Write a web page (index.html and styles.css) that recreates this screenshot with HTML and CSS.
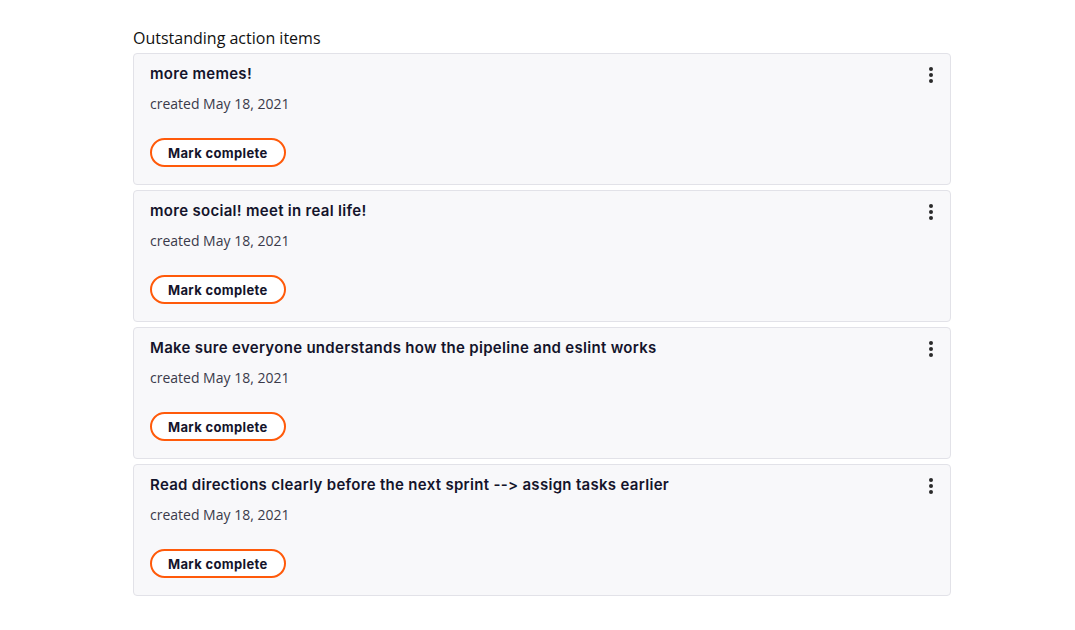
FILE: index.html
```html
<!DOCTYPE html>
<html>
<head>
<meta charset="utf-8">
<link rel="stylesheet" href="styles.css">
</head>
<body>
<main class="page">
  <h2 class="heading">Outstanding action items</h2>
  <ul class="list">
    <li class="card">
      <div class="card-top">
        <h3 class="title">more memes!</h3>
        <button class="kebab" aria-label="More options"><span></span><span></span><span></span></button>
      </div>
      <p class="date">created May 18, 2021</p>
      <button class="mark">Mark complete</button>
    </li>
    <li class="card">
      <div class="card-top">
        <h3 class="title">more social! meet in real life!</h3>
        <button class="kebab" aria-label="More options"><span></span><span></span><span></span></button>
      </div>
      <p class="date">created May 18, 2021</p>
      <button class="mark">Mark complete</button>
    </li>
    <li class="card">
      <div class="card-top">
        <h3 class="title">Make sure everyone understands how the pipeline and eslint works</h3>
        <button class="kebab" aria-label="More options"><span></span><span></span><span></span></button>
      </div>
      <p class="date">created May 18, 2021</p>
      <button class="mark">Mark complete</button>
    </li>
    <li class="card">
      <div class="card-top">
        <h3 class="title">Read directions clearly before the next sprint --&gt; assign tasks earlier</h3>
        <button class="kebab" aria-label="More options"><span></span><span></span><span></span></button>
      </div>
      <p class="date">created May 18, 2021</p>
      <button class="mark">Mark complete</button>
    </li>
  </ul>
</main>
</body>
</html>
```

FILE: styles.css
```css
* { box-sizing: border-box; }
html, body { margin: 0; padding: 0; background: #ffffff; }
body { font-family: "Open Sans", "Noto Sans", sans-serif; color: #1d1d2b; }

.page {
  width: 818px;
  margin-left: 133px;
  padding-top: 27px;
}

.heading {
  margin: 0 0 4px 0;
  font-size: 16px;
  line-height: 22px;
  font-weight: 400;
  color: #111111;
}

.list {
  list-style: none;
  margin: 0;
  padding: 0;
  display: flex;
  flex-direction: column;
  gap: 5px;
}

.card {
  background: #f8f8fa;
  border: 1px solid #e2e2e8;
  border-radius: 4px;
  padding: 9px 16px 16px 16px;
  height: 132px;
  display: flex;
  flex-direction: column;
  align-items: flex-start;
}

.card-top {
  width: 100%;
  display: flex;
  justify-content: space-between;
  align-items: flex-start;
}

.title {
  margin: 0;
  font-family: Inter, "Noto Sans", sans-serif;
  font-size: 15px;
  line-height: 22px;
  font-weight: 600;
  color: #14142b;
  letter-spacing: 0.3px;
}

.kebab {
  border: 0;
  background: transparent;
  padding: 0;
  margin: 4px 0 0 0;
  width: 6px;
  display: flex;
  flex-direction: column;
  align-items: center;
  gap: 2px;
}
.kebab span {
  width: 4px;
  height: 4px;
  border-radius: 50%;
  background: #2a2a2a;
}

.date {
  margin: 9px 0 0 0;
  font-size: 14px;
  line-height: 20px;
  color: #3a3a4a;
}

.mark {
  margin-top: 24px;
  height: 29px;
  padding: 0 16px;
  border: 2px solid #ff5a0a;
  border-radius: 15px;
  background: #ffffff;
  font-family: Inter, "Noto Sans", sans-serif;
  font-size: 13px;
  font-weight: 700;
  letter-spacing: 0.35px;
  color: #14142b;
  cursor: pointer;
}
```
